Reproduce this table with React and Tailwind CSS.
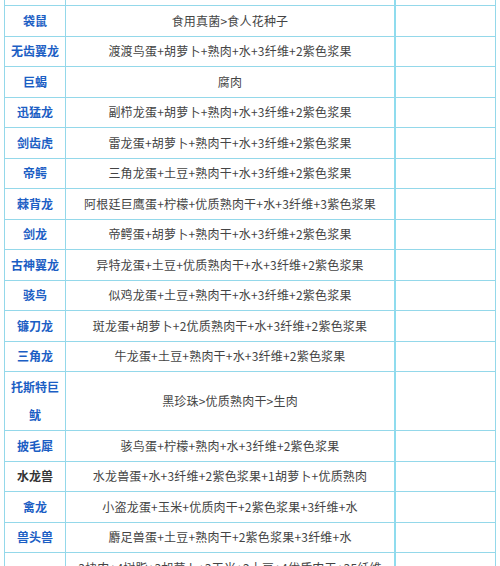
const rows = [
  { name: "袋鼠", recipe: "食用真菌>食人花种子" },
  { name: "无齿翼龙", recipe: "渡渡鸟蛋+胡萝卜+熟肉+水+3纤维+2紫色浆果" },
  { name: "巨蝎", recipe: "腐肉" },
  { name: "迅猛龙", recipe: "副栉龙蛋+胡萝卜+熟肉+水+3纤维+2紫色浆果" },
  { name: "剑齿虎", recipe: "雷龙蛋+胡萝卜+熟肉干+水+3纤维+2紫色浆果" },
  { name: "帝鳄", recipe: "三角龙蛋+土豆+熟肉干+水+3纤维+2紫色浆果" },
  { name: "棘背龙", recipe: "阿根廷巨鹰蛋+柠檬+优质熟肉干+水+3纤维+3紫色浆果" },
  { name: "剑龙", recipe: "帝鳄蛋+胡萝卜+熟肉干+水+3纤维+2紫色浆果" },
  { name: "古神翼龙", recipe: "异特龙蛋+土豆+优质熟肉干+水+3纤维+2紫色浆果" },
  { name: "骇鸟", recipe: "似鸡龙蛋+土豆+熟肉干+水+3纤维+2紫色浆果" },
  { name: "镰刀龙", recipe: "斑龙蛋+胡萝卜+2优质熟肉干+水+3纤维+2紫色浆果" },
  { name: "三角龙", recipe: "牛龙蛋+土豆+熟肉干+水+3纤维+2紫色浆果" },
  { name: "托斯特巨鱿", recipe: "黑珍珠>优质熟肉干>生肉", tall: true },
  { name: "披毛犀", recipe: "骇鸟蛋+柠檬+熟肉+水+3纤维+2紫色浆果" },
  { name: "水龙兽", recipe: "水龙兽蛋+水+3纤维+2紫色浆果+1胡萝卜+优质熟肉", dark: true },
  { name: "禽龙", recipe: "小盗龙蛋+玉米+优质肉干+2紫色浆果+3纤维+水" },
  { name: "兽头兽", recipe: "麝足兽蛋+土豆+熟肉干+2紫色浆果+3纤维+水" },
  { name: "羽瑞螺", recipe: "3块肉+4树脂+3胡萝卜+3玉米+2土豆+4优质肉干+35纤维+水+2紫色浆果", tall: true },
];

const font = { fontFamily: '"Noto Sans CJK SC", "Noto Sans", sans-serif' };

export default function App() {
  return (
    <div className="w-[500px] h-[566px] overflow-hidden bg-white pl-[4px]" style={font}>
      <div className="w-[492px] border-l border-r border-[#94d8ea]">
        <div className="grid grid-cols-[61px_330px_1fr] h-[6px] border-b border-[#94d8ea]">
          <div className="border-r border-[#94d8ea]"></div>
          <div className="border-r-2 border-[#8fdcee]"></div>
          <div></div>
        </div>
        {rows.map((r, i) => (
          <div
            key={i}
            className={
              "grid grid-cols-[61px_330px_1fr] border-b border-[#94d8ea] " +
              (r.tall ? "h-[59px]" : "h-[30.5px]")
            }
          >
            <div
              className={
                "border-r border-[#94d8ea] flex items-center justify-center text-center text-[12px] font-bold leading-[28px] px-[4px] " +
                (r.dark ? "text-[#333333]" : "text-[#1b5ec4]")
              }
            >
              {r.name}
            </div>
            <div className="border-r-2 border-[#8fdcee] flex items-center justify-center text-center text-[12px] text-[#444444] leading-[28px] tracking-[0.2px] px-[6px]">
              {r.recipe}
            </div>
            <div></div>
          </div>
        ))}
      </div>
    </div>
  );
}
